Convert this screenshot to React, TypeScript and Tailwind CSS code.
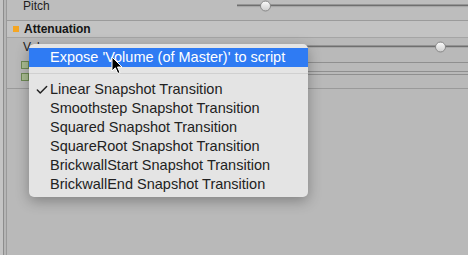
import { Check } from 'lucide-react'

const ITEMS = [
  'Linear Snapshot Transition',
  'Smoothstep Snapshot Transition',
  'Squared Snapshot Transition',
  'SquareRoot Snapshot Transition',
  'BrickwallStart Snapshot Transition',
  'BrickwallEnd Snapshot Transition',
]

function Slider({ thumb }: { thumb: number }) {
  return (
    <div className="relative flex-1 h-full">
      <div className="absolute left-0 right-0 top-1/2 -translate-y-1/2 h-[3px] bg-[#6f6f6f] border-b border-[#e0e0e0]" />
      <div
        className="absolute top-1/2 -translate-y-1/2 w-[11px] h-[11px] rounded-full bg-gradient-to-b from-[#fafafa] to-[#cfcfcf] border border-[#8a8a8a]"
        style={{ left: thumb - 5 }}
      />
    </div>
  )
}

export default function App() {
  return (
    <div className="relative w-[468px] h-[255px] overflow-hidden bg-[#b9b9b9] flex" style={{ fontFamily: '"Liberation Sans", Arial, sans-serif' }}>
      <div className="w-[4px] bg-[#c4c4c4] border-r border-[#8d8d8d]" />
      <div className="w-[3px] bg-[#b5b5b5] border-r border-[#9a9a9a]" />
      <div className="flex-1 flex flex-col">
        <div className="h-[21px] flex flex-col bg-[#bdbdbd] border-b border-[#9b9b9b]">
          <div className="h-[11px] flex items-center">
            <span className="pl-[16px] w-[230px] text-[12px] text-[#1e1e1e]">Pitch</span>
            <Slider thumb={28} />
          </div>
        </div>
        <div className="h-[17px] flex items-center gap-[5px] bg-[#c3c3c3] border-b border-[#a5a5a5]">
          <div className="ml-[6px] w-[6px] h-[6px] bg-[#f5a623]" />
          <span className="text-[12px] font-bold text-[#151515]">Attenuation</span>
        </div>
        <div className="h-[18px] flex items-center">
          <span className="pl-[16px] w-[60px] text-[12px] text-[#1e1e1e]">Volume</span>
          <Slider thumb={373} />
        </div>
        <div className="flex flex-col gap-[4px] pl-[14px] pt-[5px]">
          <div className="w-[8px] h-[8px] bg-[#a9bc92] border border-[#6e8a55]" />
          <div className="w-[8px] h-[8px] bg-[#a9bc92] border border-[#6e8a55]" />
        </div>
        <div className="mt-[7px] border-t border-[#9a9a9a]" />
      </div>

      <div className="absolute left-[300px] right-0 top-[62px] flex flex-col">
        <div className="h-[9px] border-t border-[#8f8f8f]" />
        <div className="h-[3px] border-t border-[#8f8f8f]" />
        <div className="h-[9px] border-t border-[#8f8f8f]" />
      </div>

      <div className="absolute left-[29px] top-[44px] w-[279px] h-[153px] rounded-[5px] bg-[#e4e4e4] shadow-[0_4px_14px_rgba(0,0,0,0.3)] pt-[4px] text-[14.5px] text-[#222]">
        <div className="h-[19px] flex items-center pl-[21px] bg-[#2f7bf3] text-white">Expose 'Volume (of Master)' to script</div>
        <div className="h-[13px] flex items-center">
          <div className="w-full border-t border-[#d0d0d0]" />
        </div>
        {ITEMS.map((t, i) => (
          <div key={t} className="h-[19px] flex items-center">
            <span className="w-[21px] flex justify-center">{i === 0 && <Check size={14} strokeWidth={2.5} className="ml-[4px]" />}</span>
            {t}
          </div>
        ))}
      </div>

      <svg className="absolute left-[111px] top-[56px]" width="13" height="19" viewBox="0 0 13 19">
        <path d="M1 1 L1 15 L4.3 11.8 L6.8 17.5 L9 16.5 L6.5 11 L11 11 Z" fill="#000" stroke="#fff" strokeWidth="1" />
      </svg>
    </div>
  )
}
